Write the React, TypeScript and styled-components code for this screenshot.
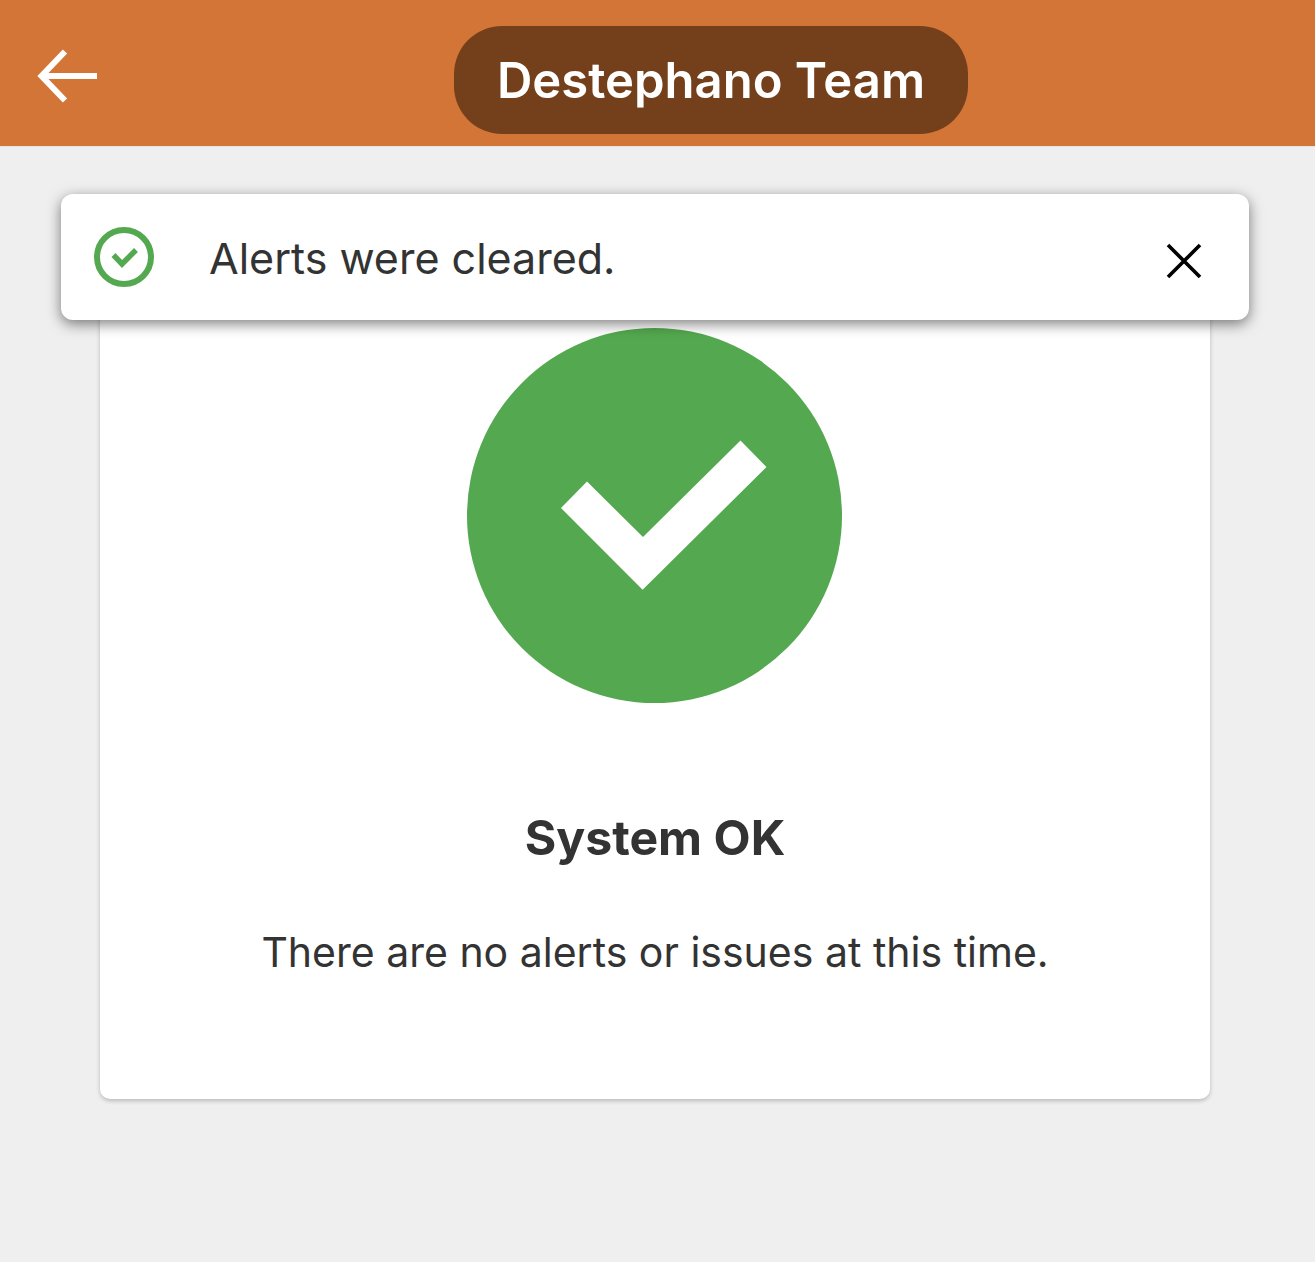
import { createGlobalStyle } from "styled-components";
import styled from "styled-components";

const GlobalStyle = createGlobalStyle`
  html, body {
    margin: 0;
    padding: 0;
    background: #efefef;
    font-family: Inter, "Liberation Sans", sans-serif;
  }
`;

const Page = styled.div`
  position: relative;
  width: 1315px;
  height: 1262px;
  overflow: hidden;
  background: #efefef;
`;

const Header = styled.header`
  height: 146px;
  box-sizing: border-box;
  padding-top: 14px;
  display: flex;
  align-items: center;
  justify-content: center;
  position: relative;
  background: #d37536;
  box-shadow: 0 1px 0 #e4e4e4;
`;

const BackButton = styled.button`
  position: absolute;
  left: 34px;
  top: 46px;
  width: 66px;
  height: 60px;
  padding: 0;
  border: 0;
  background: none;
  display: block;

  svg {
    display: block;
  }
`;

const TeamPill = styled.div`
  width: 514px;
  height: 108px;
  margin-left: 107px;
  display: flex;
  align-items: center;
  justify-content: center;
  border-radius: 48px;
  background: #74401b;
  color: #fff;
  font-size: 49px;
  font-weight: 600;
`;

const Content = styled.main`
  padding: 96px 105px 0 100px;
`;

const Card = styled.section`
  height: 857px;
  box-sizing: border-box;
  padding-top: 85.5px;
  display: flex;
  flex-direction: column;
  align-items: center;
  border-radius: 10px;
  background: #fff;
  box-shadow: 0 2px 4px rgba(0, 0, 0, 0.22);
`;

const StatusIcon = styled.svg`
  display: block;
  width: 375px;
  height: 375px;
  margin-right: 1px;
`;

const Title = styled.h1`
  margin: 105.5px 0 0;
  color: #333;
  font-size: 48.2px;
  line-height: 60px;
  font-weight: 700;
`;

const Message = styled.p`
  margin: 59px 0 0;
  color: #333;
  font-size: 41px;
  line-height: 50px;
  font-weight: 400;
`;

const Toast = styled.div`
  position: absolute;
  left: 61px;
  top: 194px;
  width: 1188px;
  height: 126px;
  box-sizing: border-box;
  padding: 0 46px 0 33px;
  display: flex;
  align-items: center;
  border-radius: 12px;
  background: #fff;
  box-shadow: 0 4px 14px rgba(0, 0, 0, 0.5);
`;

const ToastText = styled.span`
  flex: 1;
  margin-left: 55px;
  padding-top: 2px;
  color: #333;
  font-size: 43px;
  font-weight: 400;
`;

const CloseButton = styled.button`
  width: 40px;
  height: 40px;
  margin: 7px -1px 0 1px;
  padding: 0;
  border: 0;
  background: none;

  svg {
    display: block;
  }
`;

export default function App() {
  return (
    <>
      <GlobalStyle />
      <Page>
        <Header>
          <BackButton aria-label="Back">
            <svg width="66" height="60" viewBox="0 0 66 60" fill="none" stroke="#fff" strokeWidth="6">
              <path d="M63 30H8" />
              <path d="M31 5.5L7.5 30L31 54.5" />
            </svg>
          </BackButton>
          <TeamPill>Destephano Team</TeamPill>
        </Header>
        <Content>
          <Card>
            <StatusIcon viewBox="0 0 375 375">
              <circle cx="187.5" cy="187.5" r="187.5" fill="#54a84f" />
              <path fill="#fff" d="M94 180L120 153.6L176 209L273.5 112.4L299.5 139L175.6 261.8Z" />
            </StatusIcon>
            <Title>System OK</Title>
            <Message>There are no alerts or issues at this time.</Message>
          </Card>
        </Content>
        <Toast>
          <svg width="60" height="60" viewBox="0 0 60 60" fill="none" stroke="#54a84f">
            <circle cx="30" cy="30" r="27" strokeWidth="6" />
            <path d="M19.5 28L28 37L42 23" strokeWidth="5.5" />
          </svg>
          <ToastText>Alerts were cleared.</ToastText>
          <CloseButton aria-label="Dismiss">
            <svg width="40" height="40" viewBox="0 0 40 40" fill="none" stroke="#000" strokeWidth="3.6">
              <path d="M4 4L36 36M36 4L4 36" />
            </svg>
          </CloseButton>
        </Toast>
      </Page>
    </>
  );
}
